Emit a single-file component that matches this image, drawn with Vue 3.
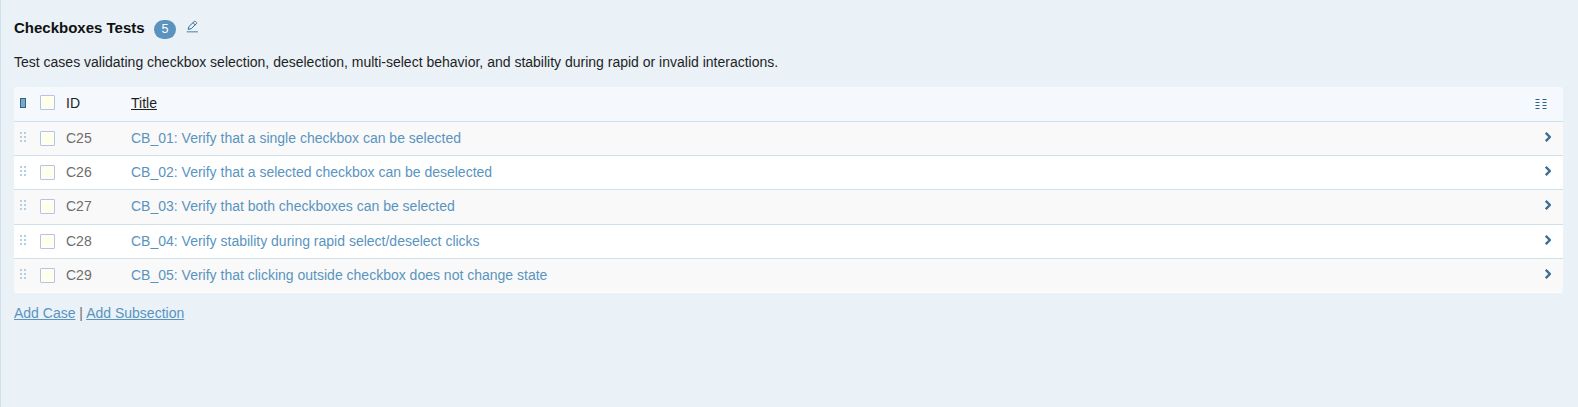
<script setup>
const cases = [
  { id: 'C25', title: 'CB_01: Verify that a single checkbox can be selected' },
  { id: 'C26', title: 'CB_02: Verify that a selected checkbox can be deselected' },
  { id: 'C27', title: 'CB_03: Verify that both checkboxes can be selected' },
  { id: 'C28', title: 'CB_04: Verify stability during rapid select/deselect clicks' },
  { id: 'C29', title: 'CB_05: Verify that clicking outside checkbox does not change state' },
]
</script>

<template>
  <main class="section">
    <header class="heading">
      <h1>Checkboxes Tests</h1>
      <span class="badge">5</span>
      <svg class="edit" width="13" height="13" viewBox="0 0 13 13">
        <path d="M2.1 9.4 L2.9 6.6 L8.3 1.4 L9.3 1.4 L10.6 2.7 L10.6 3.5 L5.2 8.7 Z M7 2.7 L9.3 5" fill="none" stroke="#3a6a8f" stroke-width="1" stroke-linejoin="round" />
        <rect x=".7" y="11" width="11.3" height="1.5" fill="#78a8cb" />
      </svg>
    </header>
    <p class="description">Test cases validating checkbox selection, deselection, multi-select behavior, and stability during rapid or invalid interactions.</p>

    <div class="table">
      <div class="row head">
        <svg class="handle" width="6" height="10" viewBox="0 0 6 10"><rect x=".5" y=".5" width="5" height="9" fill="#75aacb" stroke="#356488" /></svg>
        <span class="box"></span>
        <span class="id">ID</span>
        <span class="name"><u>Title</u></span>
        <svg class="columns" width="12" height="10" viewBox="0 0 12 10">
          <path d="M0 .5H5M7 .5H12M0 3.5H5M7 3.5H12M0 6.5H5M7 6.5H12M0 9.5H5M7 9.5H12" stroke="#8fb0c8" />
          <path d="M1 .5H4M8 .5H11M1 3.5H4M8 3.5H11M1 6.5H4M8 6.5H11M1 9.5H4M8 9.5H11" stroke="#2f6388" />
        </svg>
      </div>
      <div v-for="item in cases" :key="item.id" class="row case">
        <svg class="handle" width="6" height="10" viewBox="0 0 6 10"><path d="M1 0V10M5 0V10" stroke="#b5cfe2" stroke-width="2" stroke-dasharray="2" /></svg>
        <span class="box"></span>
        <span class="id">{{ item.id }}</span>
        <a class="name">{{ item.title }}</a>
        <svg class="chevron" width="6" height="10" viewBox="0 0 6 10"><path d="M.8 .8L4.8 5L.8 9.2" fill="none" stroke="#3e6e93" stroke-width="2.3" /></svg>
      </div>
    </div>

    <nav class="links"><a>Add Case</a> | <a>Add Subsection</a></nav>
  </main>
</template>

<style>
body {
  margin: 0;
  background: #eaf1f7;
}
</style>

<style scoped>
.section {
  box-sizing: border-box;
  height: 407px;
  padding: 18px 15px 0 13px;
  border-left: 1px solid #cfe1ec;
  background: #eaf1f7;
  color: #1f1f1f;
  font: 14px/20px "Liberation Sans", Arial, sans-serif;
}
.heading {
  display: flex;
  align-items: flex-start;
  height: 34px;
}
h1 {
  margin: 0;
  width: 140px;
  color: #111;
  font-size: 15px;
  line-height: 20px;
  white-space: nowrap;
}
.badge {
  width: 22px;
  height: 19px;
  margin-top: 2px;
  border-radius: 10px;
  background: #5a93bd;
  color: #fff;
  font-size: 12.5px;
  line-height: 18px;
  text-align: center;
}
.edit {
  margin: 2px 0 0 10px;
}
.description {
  height: 35px;
  margin: 0;
}
.table {
  overflow: hidden;
  border-radius: 3px;
}
.row {
  display: grid;
  grid-template-columns: 20px 26px 65px 1fr auto;
  align-items: start;
  box-sizing: border-box;
  height: 34px;
  padding: 0 12px 0 6px;
  border-bottom: 1px solid #cfe0ea;
  background: #fff;
}
.row:nth-child(even) {
  background: #f9f9f9;
}
.row:nth-child(3n + 1) {
  height: 35px;
}
.row.head {
  padding-right: 16px;
  background: #f5f9fe;
}
.row:last-child {
  border-bottom-color: #fff;
}
.handle,
.chevron {
  margin-top: 10px;
}
.head .handle {
  margin-top: 11px;
}
.columns {
  margin-top: 12px;
}
.box {
  box-sizing: border-box;
  width: 15px;
  height: 15px;
  margin-top: 9px;
  border: 1px solid #b6c2ee;
  border-radius: 1px;
  background: #ffffee;
}
.head .box {
  margin-top: 8px;
}
.id,
.name {
  margin-top: 6px;
}
.case .id {
  color: #6d6d6d;
}
.case .name,
.links a {
  color: #5994bf;
}
.links {
  margin-top: 10px;
  color: #6d6d6d;
}
.links a {
  text-decoration: underline;
}
</style>
